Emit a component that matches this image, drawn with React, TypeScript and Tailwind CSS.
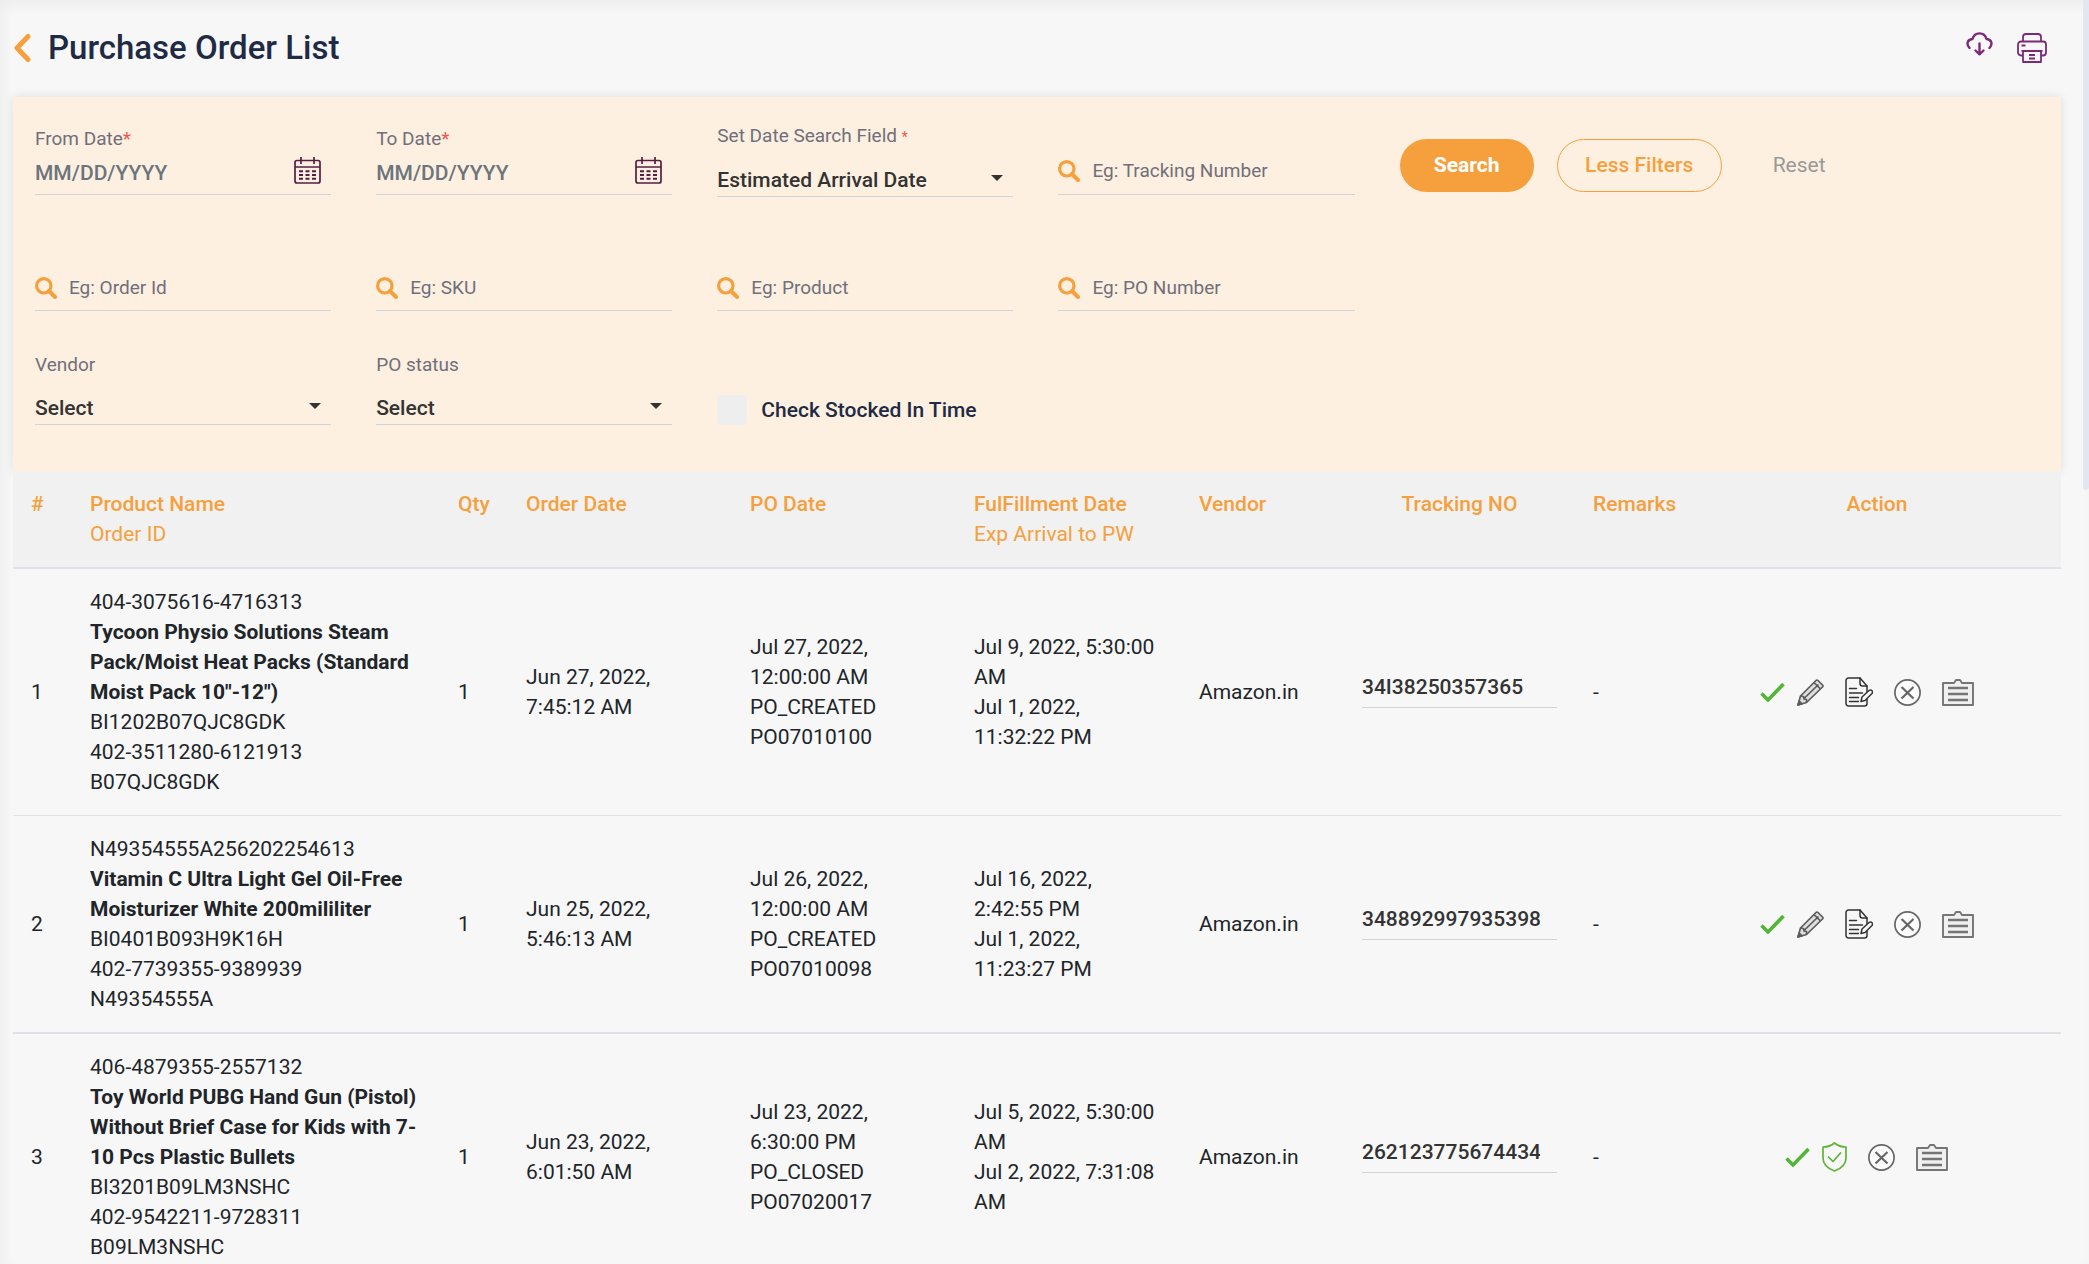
import type { ReactNode } from 'react';

type Order = {
  id: number;
  product: string[];
  title: string;
  orderId: string;
  qty: number;
  orderDate: string;
  poDate: string;
  poStatus: string;
  poNumber: string;
  fulfillment: string;
  arrival: string;
  vendor: string;
  tracking: string;
  closed?: boolean;
};

const orders: Order[] = [
  {
    id: 1,
    orderId: '404-3075616-4716313',
    title: 'Tycoon Physio Solutions Steam Pack/Moist Heat Packs (Standard Moist Pack 10"-12")',
    product: ['BI1202B07QJC8GDK', '402-3511280-6121913', 'B07QJC8GDK'],
    qty: 1,
    orderDate: 'Jun 27, 2022, 7:45:12 AM',
    poDate: 'Jul 27, 2022, 12:00:00 AM',
    poStatus: 'PO_CREATED',
    poNumber: 'PO07010100',
    fulfillment: 'Jul 9, 2022, 5:30:00 AM',
    arrival: 'Jul 1, 2022, 11:32:22 PM',
    vendor: 'Amazon.in',
    tracking: '34I38250357365',
  },
  {
    id: 2,
    orderId: 'N49354555A256202254613',
    title: 'Vitamin C Ultra Light Gel Oil-Free Moisturizer White 200mililiter',
    product: ['BI0401B093H9K16H', '402-7739355-9389939', 'N49354555A'],
    qty: 1,
    orderDate: 'Jun 25, 2022, 5:46:13 AM',
    poDate: 'Jul 26, 2022, 12:00:00 AM',
    poStatus: 'PO_CREATED',
    poNumber: 'PO07010098',
    fulfillment: 'Jul 16, 2022, 2:42:55 PM',
    arrival: 'Jul 1, 2022, 11:23:27 PM',
    vendor: 'Amazon.in',
    tracking: '348892997935398',
  },
  {
    id: 3,
    orderId: '406-4879355-2557132',
    title: 'Toy World PUBG Hand Gun (Pistol) Without Brief Case for Kids with 7-10 Pcs Plastic Bullets',
    product: ['BI3201B09LM3NSHC', '402-9542211-9728311', 'B09LM3NSHC'],
    qty: 1,
    orderDate: 'Jun 23, 2022, 6:01:50 AM',
    poDate: 'Jul 23, 2022, 6:30:00 PM',
    poStatus: 'PO_CLOSED',
    poNumber: 'PO07020017',
    fulfillment: 'Jul 5, 2022, 5:30:00 AM',
    arrival: 'Jul 2, 2022, 7:31:08 AM',
    vendor: 'Amazon.in',
    tracking: '262123775674434',
    closed: true,
  },
];

/* Icons */
function BackIcon() {
  return (
    <svg width="18" height="30" viewBox="0 0 18 30" fill="none" stroke="#f5a03d" strokeWidth="5" strokeLinecap="round" strokeLinejoin="round">
      <path d="M15 3.500 4 15l11 11.500" />
    </svg>
  );
}

function CloudIcon() {
  return (
    <svg width="27" height="24" viewBox="0 0 27 24" fill="none" stroke="#7b2a78" strokeWidth="2.400" strokeLinecap="round" strokeLinejoin="round">
      <path d="M3.500 16C.200 12.500 1 7.500 6.500 7 7.500 3.500 10 1.400 13.500 1.400S19.500 3.500 20.500 7c5.500.500 6.300 5.500 3 9" />
      <path d="M13.500 11.500v10.500M9.500 18.500l4 3.800 4-3.800" />
    </svg>
  );
}

function PrinterIcon() {
  return (
    <svg width="30" height="30" viewBox="0 0 30 30" fill="none" stroke="#7b2a78" strokeWidth="1.800" strokeLinejoin="round">
      <path d="M6 8.500V4a3 3 0 0 1 3-3h12a3 3 0 0 1 3 3v4.500" />
      <path d="M6 22.500H4a3 3 0 0 1-3-3v-8a3 3 0 0 1 3-3h22a3 3 0 0 1 3 3v8a3 3 0 0 1-3 3h-2" />
      <path d="M4.500 18h21M6 18v11h18V18M12 22h6M12 25.500h6M4.500 12.500h4" />
    </svg>
  );
}

function CalendarIcon() {
  return (
    <svg width="27" height="27" viewBox="0 0 27 27" fill="none" stroke="#571d43" strokeWidth="1.700">
      <rect x="1" y="3.500" width="25" height="22.500" rx="2" />
      <path d="M1 10h25M7 0v7M20 0v7" />
      <path d="M5 14.200h17M5 18h17M5 21.800h17" strokeWidth="1.900" strokeDasharray="4 2.500" />
    </svg>
  );
}

function SearchIcon() {
  return (
    <svg className="shrink-0" width="22" height="22" viewBox="0 0 22 22" fill="none" stroke="#f5a03d">
      <circle cx="8.800" cy="8.800" r="7.200" strokeWidth="3.200" />
      <path d="M14 14l6 6" strokeWidth="4" strokeLinecap="round" />
    </svg>
  );
}

function CheckIcon() {
  return (
    <svg width="25" height="21" viewBox="0 0 25 21" fill="none" stroke="#52b536" strokeWidth="3.600">
      <path d="M1.500 11.500 8 18 23.500 2" />
    </svg>
  );
}

function PencilIcon() {
  return (
    <svg width="27" height="27" viewBox="0 0 27 27" fill="none" stroke="#5c5c5c" strokeWidth="1.700" strokeLinejoin="round">
      <path d="M1 26 3.500 17 19 1.500q1-1 2 0L25.500 6q1 1 0 2L9.500 23.500z" fill="#dedede" />
      <path d="M3.500 17l3 .500.500 2.500 2.500.500v3M7 19.500 21.500 5.500M17 3.500l6.500 6.500" />
      <path d="M1 26l1.200-4 2.800 2.800z" fill="#5c5c5c" />
    </svg>
  );
}

function DocumentIcon() {
  return (
    <svg width="28" height="30" viewBox="0 0 28 30" fill="none" stroke="#333" strokeWidth="1.500" strokeLinejoin="round" strokeLinecap="round">
      <path d="M22 22v4.500a2.500 2.500 0 0 1-2.500 2.500h-16A2.500 2.500 0 0 1 1 26.500v-23A2.500 2.500 0 0 1 3.500 1H15l7 8v5.500" />
      <path d="M15 1v5.500A2.500 2.500 0 0 0 17.500 9H22M4.500 11.500h7M4.500 16h13M4.500 20.500h9M4.500 24.500h9" />
      <path d="M16 24.500l1-4.500 7-6.500c2-1.500 4.500.500 3 3L20 23.500z" fill="#f7f7f7" />
    </svg>
  );
}

function ShieldIcon() {
  return (
    <svg width="25" height="30" viewBox="0 0 25 30" fill="none" stroke="#5fb336" strokeWidth="1.700" strokeLinejoin="round" strokeLinecap="round">
      <path d="M12.500 1C9.500 3.500 5.500 5 1 5v11c0 6 4.500 10.500 11.500 13C19.500 26.500 24 22 24 16V5c-4.500 0-8.500-1.500-11.500-4z" />
      <path d="M6.500 15l4.500 4.500 7.500-8.500" />
    </svg>
  );
}

function CancelIcon() {
  return (
    <svg width="27" height="27" viewBox="0 0 27 27" fill="none" stroke="#666" strokeWidth="1.700">
      <circle cx="13.500" cy="13.500" r="12.600" fill="#fcfcfc" />
      <path d="M7.500 8l12 11.500M19.500 8l-12 11.500" strokeWidth="2.200" />
    </svg>
  );
}

function ClipboardIcon() {
  return (
    <svg width="32" height="27" viewBox="0 0 32 27" fill="none" stroke="#757575" strokeWidth="1.900" strokeLinejoin="round">
      <path d="M1 4h11l2-3h4l2 3h11v22H1z" fill="#f0f0f0" />
      <path d="M6 9h20M6 15h20M6 21h20" strokeWidth="2.400" />
    </svg>
  );
}

/* Filter fields */
function DateField({ id, label }: { id: string; label: string }) {
  return (
    <div>
      <label htmlFor={id} className="block leading-[26px] text-[#706f7b]">
        {label}<span className="text-[#f4564e]">*</span>
      </label>
      <div className="flex h-[43px] items-center border-b border-[#ced4da] pr-[10px]">
        <input id={id} type="text" placeholder="MM/DD/YYYY" className="w-full min-w-0 bg-transparent text-[21px] font-medium outline-none placeholder:text-[#6c757d]" />
        <button type="button" aria-label={`Pick ${label}`} className="pb-1"><CalendarIcon /></button>
      </div>
    </div>
  );
}

function SearchField({ placeholder }: { placeholder: string }) {
  return (
    <div className="flex h-[46px] items-center gap-3 border-b border-[#ced4da]">
      <SearchIcon />
      <input type="text" aria-label={placeholder} placeholder={placeholder} className="w-full min-w-0 bg-transparent outline-none placeholder:text-[#706f7b]" />
    </div>
  );
}

function SelectField({ id, label, value, required }: { id: string; label: string; value: string; required?: boolean }) {
  return (
    <div>
      <label htmlFor={id} className="block leading-[26px] text-[#706f7b]">
        {label} {required && <span className="text-[14px] text-[#f4564e]">*</span>}
      </label>
      <div className="relative mt-[13px]">
        <select id={id} className="block h-[34px] w-full appearance-none border-b border-[#ced4da] bg-transparent text-[21px] font-medium text-[#333] outline-none">
          <option>{value}</option>
        </select>
        <svg className="pointer-events-none absolute right-[10px] top-[12px]" width="12" height="6" viewBox="0 0 12 6" fill="#333">
          <path d="M0 0h12L6 6z" />
        </svg>
      </div>
    </div>
  );
}

function Th({ children, className = '' }: { children: ReactNode; className?: string }) {
  return (
    <th className={`border-b-2 border-[#dee2e6] px-[18px] py-[18px] align-top font-medium ${className}`}>
      {children}
    </th>
  );
}

export default function App() {
  return (
    <div className="relative h-screen overflow-hidden bg-[#f7f7f7] pl-[13px] pr-7 font-[Roboto,sans-serif] text-[21px] leading-[30px] text-[#212529] shadow-[inset_4px_6px_12px_rgba(0,0,0,0.04)]">
      {/* Scroll thumb */}
      <div className="absolute right-0 top-0 h-[490px] w-[6px] rounded-b bg-[#e2e7f0]"></div>

      {/* Page header */}
      <header className="flex h-[97px] items-center justify-between pb-[2px] pr-[14px]">
        <div className="flex items-center gap-[17px]">
          <button type="button" aria-label="Back"><BackIcon /></button>
          <h1 className="text-[33px] font-medium text-[#202a44]">Purchase Order List</h1>
        </div>
        <div className="flex items-center gap-6">
          <button type="button" aria-label="Download" className="pb-2"><CloudIcon /></button>
          <button type="button" aria-label="Print"><PrinterIcon /></button>
        </div>
      </header>

      {/* Filters */}
      <form className="bg-[#fdf0e0] pb-[46px] pl-[22px] pr-6 pt-[26px] text-[19px] shadow-[0_0_10px_rgba(0,0,0,0.1)]">
        <div className="grid grid-cols-6 items-center gap-x-[45px]">
          <DateField id="from" label="From Date" />
          <DateField id="to" label="To Date" />
          <SelectField id="field" label="Set Date Search Field" value="Estimated Arrival Date" required />
          <div className="pt-[23px]">
            <SearchField placeholder="Eg: Tracking Number" />
          </div>
          <div className="col-span-2 flex gap-[23px] pt-[10px] text-[21px]">
            <button type="button" className="h-[53px] w-[134px] rounded-full bg-[#f5a03d] font-bold text-white">Search</button>
            <button type="button" className="h-[53px] w-[165px] rounded-full border border-[#f5a03d] font-medium text-[#f5a03d]">Less Filters</button>
            <button type="button" className="h-[53px] px-7 text-[#999]">Reset</button>
          </div>
        </div>
        <div className="mt-[68px] grid grid-cols-6 gap-x-[45px]">
          <SearchField placeholder="Eg: Order Id" />
          <SearchField placeholder="Eg: SKU" />
          <SearchField placeholder="Eg: Product" />
          <SearchField placeholder="Eg: PO Number" />
        </div>
        <div className="mt-[41px] grid grid-cols-6 items-end gap-x-[45px]">
          <SelectField id="vendor" label="Vendor" value="Select" />
          <SelectField id="status" label="PO status" value="Select" />
          <label className="flex items-center gap-[14px] whitespace-nowrap text-[21px] font-medium text-[#202a44]">
            <input type="checkbox" className="size-[30px] appearance-none rounded-[5px] bg-[#eee]" />
            Check Stocked In Time
          </label>
        </div>
      </form>

      {/* Orders */}
      <table className="w-full table-fixed border-separate border-spacing-0">
        <thead className="bg-[#f1f1f1] text-left text-[#f5a03d]">
          <tr>
            <Th className="w-[59px]">#</Th>
            <Th className="w-[368px]">Product Name<span className="block font-normal">Order ID</span></Th>
            <Th className="w-[68px]">Qty</Th>
            <Th className="w-[224px]">Order Date</Th>
            <Th className="w-[224px]">PO Date</Th>
            <Th className="w-[225px]">FulFillment Date<span className="block font-normal">Exp Arrival to PW</span></Th>
            <Th className="w-[163px]">Vendor</Th>
            <Th className="text-center">Tracking NO</Th>
            <Th className="w-[118px]">Remarks</Th>
            <Th className="w-[368px] text-center">Action</Th>
          </tr>
        </thead>
        <tbody className="[&_td]:border-b [&_td]:border-[#dee2e6] [&_td]:p-[18px] [&_tr:nth-child(2)_td]:border-b-2">
          {orders.map((o) => (
            <tr key={o.id}>
              <td>{o.id}</td>
              <td>
                <div>{o.orderId}</div>
                <div className="font-bold">{o.title}</div>
                {o.product.map((line) => (
                  <div key={line}>{line}</div>
                ))}
              </td>
              <td>{o.qty}</td>
              <td>{o.orderDate}</td>
              <td>
                <div>{o.poDate}</div>
                <div>{o.poStatus}</div>
                <div>{o.poNumber}</div>
              </td>
              <td>
                <div>{o.fulfillment}</div>
                <div>{o.arrival}</div>
              </td>
              <td>{o.vendor}</td>
              <td>
                <input type="text" aria-label={`Tracking number ${o.id}`} defaultValue={o.tracking} className="mb-[10px] block h-[42px] w-full border-b border-[#ced4da] bg-transparent pr-[17px] font-medium text-[#333] outline-none" />
              </td>
              <td>-</td>
              <td>
                <div className="flex items-center justify-center gap-[21px] pr-[21px]">
                  <div className="flex items-center gap-3">
                    <button type="button" aria-label="Approve"><CheckIcon /></button>
                    {o.closed ? (
                      <button type="button" aria-label="Verified"><ShieldIcon /></button>
                    ) : (
                      <button type="button" aria-label="Edit"><PencilIcon /></button>
                    )}
                  </div>
                  {!o.closed && <button type="button" aria-label="Notes"><DocumentIcon /></button>}
                  <button type="button" aria-label="Cancel"><CancelIcon /></button>
                  <button type="button" aria-label="Details"><ClipboardIcon /></button>
                </div>
              </td>
            </tr>
          ))}
        </tbody>
      </table>
    </div>
  );
}
